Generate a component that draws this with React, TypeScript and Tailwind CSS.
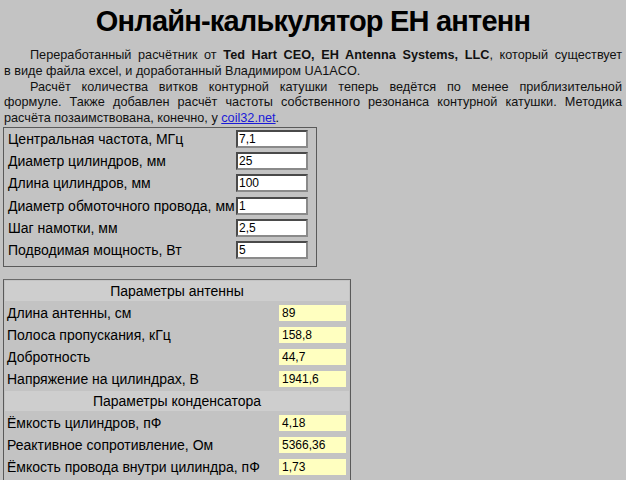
import React from 'react';

const inputs = [
    { label: 'Центральная частота, МГц', value: '7,1' },
    { label: 'Диаметр цилиндров, мм', value: '25' },
    { label: 'Длина цилиндров, мм', value: '100' },
    { label: 'Диаметр обмоточного провода, мм', value: '1' },
    { label: 'Шаг намотки, мм', value: '2,5' },
    { label: 'Подводимая мощность, Вт', value: '5' },
];

type Row = { header: string } | { label: string; value: string };

const results: Row[] = [
    { header: 'Параметры антенны' },
    { label: 'Длина антенны, см', value: '89' },
    { label: 'Полоса пропускания, кГц', value: '158,8' },
    { label: 'Добротность', value: '44,7' },
    { label: 'Напряжение на цилиндрах, В', value: '1941,6' },
    { header: 'Параметры конденсатора' },
    { label: 'Ёмкость цилиндров, пФ', value: '4,18' },
    { label: 'Реактивное сопротивление, Ом', value: '5366,36' },
    { label: 'Ёмкость провода внутри цилиндра, пФ', value: '1,73' },
];

// строки абзаца разбиты как в оригинале, чтобы перенос совпадал
const justify = 'whitespace-nowrap [text-align-last:justify]';

export default function App() {
    return (
        <div className="min-h-[480px] bg-[#c3c3c3] text-black font-['Liberation_Sans',Arial,sans-serif]">
            <h1 className="text-center text-[29px] tracking-[-0.8px] font-bold leading-[40px] pt-[1px]">
                Онлайн-калькулятор ЕН антенн
            </h1>

            <div className="px-[4px] pt-[7px] text-[12.7px] leading-[15.8px] text-[#111]">
                <div className={`${justify} pl-[26px]`}>
                    Переработанный расчётник от <b>Ted Hart CEO, EH Antenna Systems, LLC</b>, который существует
                </div>
                <div className="whitespace-nowrap">в виде файла excel, и доработанный Владимиром UA1ACO.</div>
                <div className={`${justify} pl-[26px]`}>
                    Расчёт количества витков контурной катушки теперь ведётся по менее приблизительной
                </div>
                <div className={justify}>
                    формуле. Также добавлен расчёт частоты собственного резонанса контурной катушки. Методика
                </div>
                <div className="whitespace-nowrap">
                    расчёта позаимствована, конечно, у{' '}
                    <a href="#" className="text-[#1a1ad8] underline">coil32.net</a>.
                </div>
            </div>

            {/* исходные данные */}
            <div className="ml-[3px] w-[314px] border border-[#5a5a5a] pl-[3px] pr-[8px] pb-[5px]">
                {inputs.map((row) => (
                    <div key={row.label} className="flex items-center justify-between h-[22.2px]">
                        <span className="text-[14px] leading-[20px] pl-[1px] whitespace-nowrap">{row.label}</span>
                        <input
                            type="text"
                            defaultValue={row.value}
                            className="w-[72px] h-[18px] bg-white border-2 border-t-[#4a4a4a] border-l-[#4a4a4a] border-r-[#8a8a8a] border-b-[#8a8a8a] px-[1px] text-[12px] leading-[14px] font-['Liberation_Sans',sans-serif] outline-none"
                        />
                    </div>
                ))}
            </div>

            {/* результаты */}
            <div className="ml-[3px] mt-[12px] w-[348px] border border-[#5a5a5a] border-t-[#6a6a6a] px-[1px] pt-[1px] pb-[8px] flex flex-col gap-[2px]">
                {results.map((row, i) =>
                    'header' in row ? (
                        <div key={i} className="h-[20px] bg-[#cecece] text-center text-[14px] leading-[20px]">
                            {row.header}
                        </div>
                    ) : (
                        <div key={i} className="flex items-center justify-between h-[20px] pl-[2px] pr-[3px]">
                            <span className="text-[14px] leading-[20px] whitespace-nowrap">{row.label}</span>
                            <span className="w-[67px] h-[16px] bg-[#ffffc0] px-[3px] text-[12px] leading-[16px] font-['Liberation_Sans',sans-serif]">
                                {row.value}
                            </span>
                        </div>
                    )
                )}
            </div>
        </div>
    );
}
